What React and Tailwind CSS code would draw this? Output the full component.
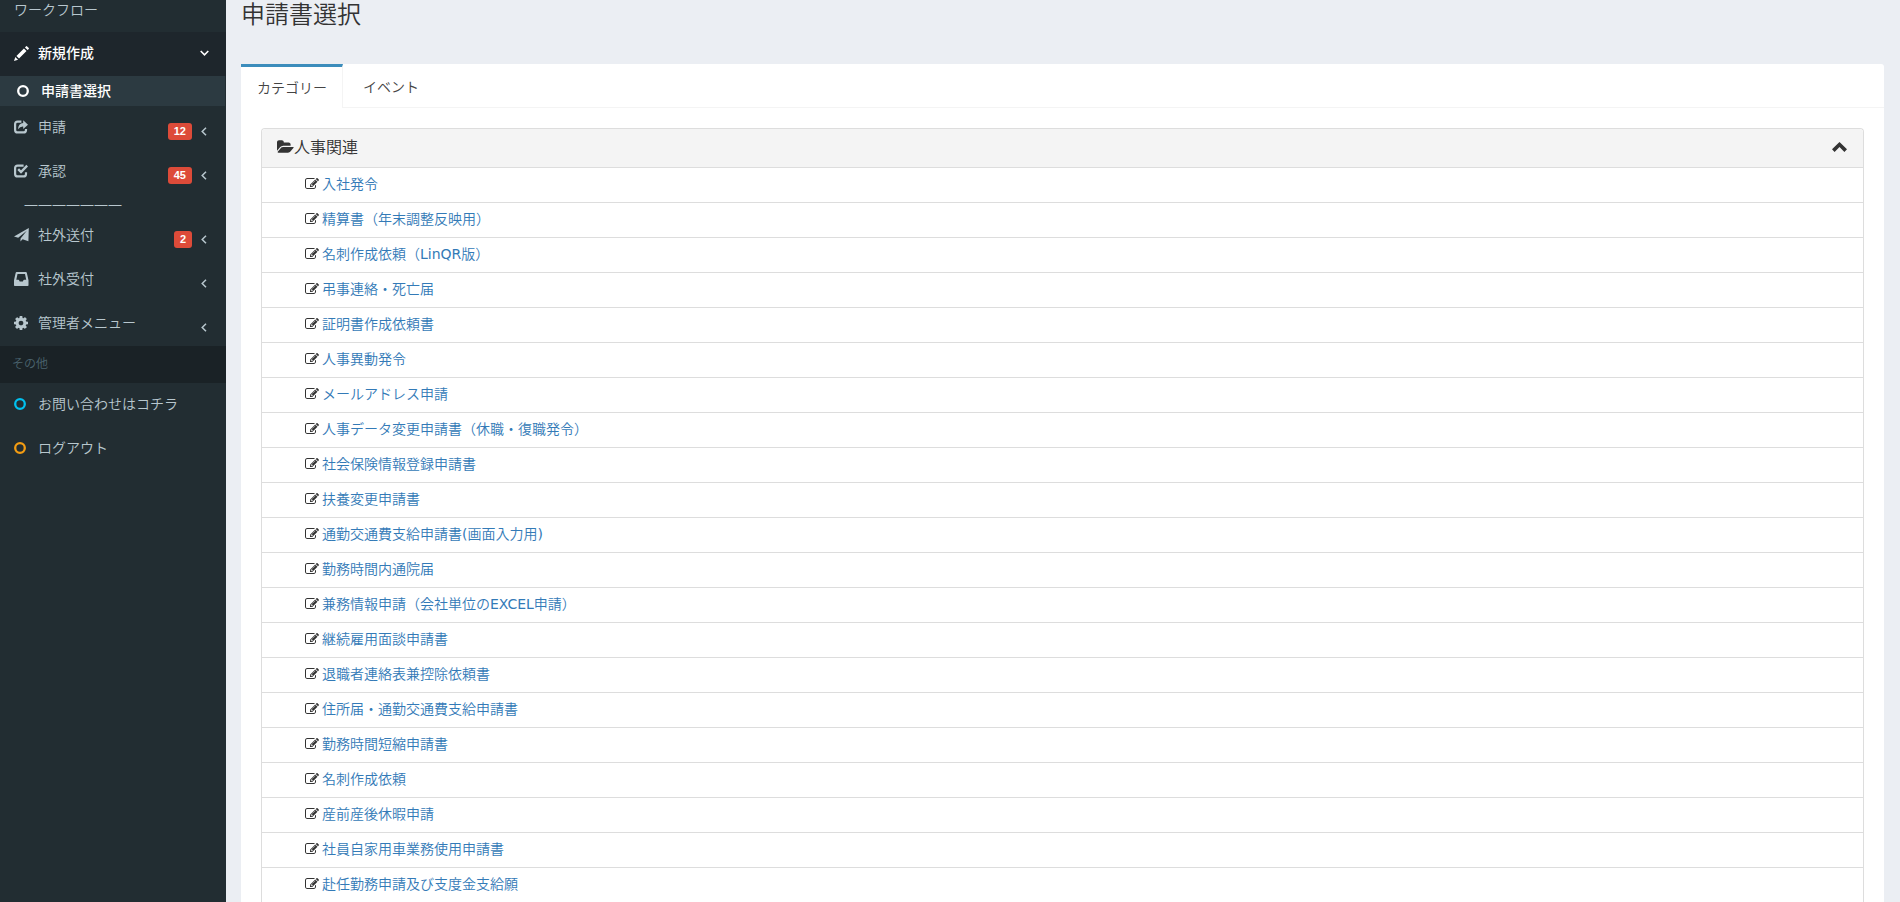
import React, { useState } from 'react';

const forms = [
  '入社発令',
  '精算書（年末調整反映用）',
  '名刺作成依頼（LinQR版）',
  '弔事連絡・死亡届',
  '証明書作成依頼書',
  '人事異動発令',
  'メールアドレス申請',
  '人事データ変更申請書（休職・復職発令）',
  '社会保険情報登録申請書',
  '扶養変更申請書',
  '通勤交通費支給申請書(画面入力用)',
  '勤務時間内通院届',
  '兼務情報申請（会社単位のEXCEL申請）',
  '継続雇用面談申請書',
  '退職者連絡表兼控除依頼書',
  '住所届・通勤交通費支給申請書',
  '勤務時間短縮申請書',
  '名刺作成依頼',
  '産前産後休暇申請',
  '社員自家用車業務使用申請書',
  '赴任勤務申請及び支度金支給願',
];

const PencilIcon = () => (
  <svg viewBox="-16 -16 1232 1232" className="w-[15px] h-[15px] shrink-0" fill="currentColor" aria-hidden="true">
    <g transform="matrix(1 0 0 -1 0 1200)">
      <path d="M1011 1210q19 0 33 -13l153 -153q13 -14 13 -33t-13 -33l-99 -92l-214 214l95 96q13 14 32 14zM1013 800l-615 -614l-214 214l614 614zM317 96l-333 -112l110 335z" />
    </g>
  </svg>
);

const ShareIcon = () => (
  <svg viewBox="0 0 14 14" className="w-[14px] h-[14px] shrink-0" aria-hidden="true">
    <path d="M7.4 1.6H3.6Q1.1 1.6 1.1 4.1V9.9Q1.1 12.4 3.6 12.4H9.5Q12 12.4 12 9.9V9" fill="none" stroke="currentColor" strokeWidth="2.2" />
    <path d="M9.2 0.2L14 4.7L9.2 9V6.5Q6 6.3 4 9.2Q4.3 3.4 9.2 2.9z" fill="currentColor" />
  </svg>
);

const CheckIcon = () => (
  <svg viewBox="0 0 14 14" className="w-[14px] h-[14px] shrink-0" fill="none" stroke="currentColor" aria-hidden="true">
    <path d="M9.6 1.6H3.6Q1.1 1.6 1.1 4.1V9.9Q1.1 12.4 3.6 12.4H9.5Q12 12.4 12 9.9V8.2" strokeWidth="2.2" />
    <path d="M4.2 5.2L7 8L13.2 1.6" strokeWidth="2.4" />
  </svg>
);

const SendIcon = () => (
  <svg viewBox="0 0 15 14" className="w-[15px] h-[14px] shrink-0" fill="currentColor" aria-hidden="true">
    <path d="M14.8 0L0 8.6L4.2 9.8L12.8 2.8L6.6 10.4L6.4 13.6L8.6 11.2L14.4 13.2z" />
  </svg>
);

const InboxIcon = () => (
  <svg viewBox="0 0 15 14" className="w-[15px] h-[14px] shrink-0" fill="currentColor" fillRule="evenodd" aria-hidden="true">
    <path d="M2.6 0H11.9Q12.6 0 12.8 0.7L14.5 8.2V13.2Q14.5 14 13.7 14H0.8Q0 14 0 13.2V8.2L1.7 0.7Q1.9 0 2.6 0zM3.5 1.9L2.3 7.8H4.4Q5 7.8 5.2 8.4L5.7 9.6H8.8L9.3 8.4Q9.5 7.8 10.1 7.8H12.2L11 1.9z" />
  </svg>
);

const CogIcon = () => (
  <svg viewBox="128 128 1536 1536" className="w-[14px] h-[14px] shrink-0" fill="currentColor" aria-hidden="true">
    <path d="M1152 896q0-106-75-181t-181-75-181 75-75 181 75 181 181 75 181-75 75-181zm512-109v222q0 12-8 23t-20 13l-185 28q-19 54-39 91 35 50 107 138 10 12 10 25t-9 23q-27 37-99 108t-94 71q-12 0-26-9l-138-108q-44 23-91 38-16 136-29 186-7 28-36 28h-222q-14 0-24.5-8.5t-11.5-21.5l-28-184q-49-16-90-37l-141 107q-10 9-25 9-14 0-25-11-126-114-165-168-7-10-7-23 0-12 8-23 15-21 51-66.5t54-70.5q-27-50-41-99l-183-27q-13-2-21-12.5t-8-23.5v-222q0-12 8-23t19-13l186-28q14-46 39-92-40-57-107-138-10-12-10-24 0-10 9-23 26-36 98.5-107.5t94.5-71.5q13 0 26 10l138 107q44-23 91-38 16-136 29-186 7-28 36-28h222q14 0 24.5 8.5t11.5 21.5l28 184q49 16 90 37l142-107q9-9 24-9 13 0 25 10 129 119 165 170 7 8 7 22 0 12-8 23-15 21-51 66.5t-54 70.5q26 50 41 98l183 28q13 2 21 12.5t8 23.5z" />
  </svg>
);

const CircleIcon = () => (
  <svg viewBox="0 0 12 12" className="w-3 h-3 shrink-0" fill="none" stroke="currentColor" strokeWidth="2.3" aria-hidden="true">
    <circle cx="6" cy="6" r="4.8" />
  </svg>
);

const AngleLeft = () => (
  <svg viewBox="0 0 6 9" className="w-[6px] h-[9px]" fill="none" stroke="currentColor" strokeWidth="1.5" aria-hidden="true">
    <path d="M5 0.7L1.2 4.5L5 8.3" />
  </svg>
);

const AngleDown = () => (
  <svg viewBox="0 0 9 6" className="w-[9px] h-[6px]" fill="none" stroke="currentColor" strokeWidth="1.6" aria-hidden="true">
    <path d="M0.7 1L4.5 4.8L8.3 1" />
  </svg>
);

const FolderOpenIcon = () => (
  <svg viewBox="0 0 1920 1792" className="w-[17px] h-4 shrink-0" fill="currentColor" aria-hidden="true">
    <path d="M1879 952q0 31-31 66l-336 396q-43 51-120.5 86.5t-143.5 35.5h-1088q-34 0-60.5-13t-26.5-43q0-31 31-66l336-396q43-51 120.5-86.5t143.5-35.5h1088q34 0 60.5 13t26.5 43zm-343-344v160h-832q-94 0-197 47.5t-164 119.5l-337 396-5 6q0-4-.5-12.5t-.5-12.5v-960q0-92 66-158t158-66h320q92 0 158 66t66 158v32h544q92 0 158 66t66 158z" />
  </svg>
);

const ChevronUpIcon = () => (
  <svg viewBox="0 0 15 10" className="w-[15px] h-[10px]" fill="currentColor" aria-hidden="true">
    <path d="M7.5 0L15 7.3L12.4 9.9L7.5 5.1L2.6 9.9L0 7.3z" />
  </svg>
);

const EditIcon = () => (
  <svg viewBox="0 0 1792 1792" className="w-[14px] h-[14px] shrink-0" fill="currentColor" aria-hidden="true">
    <path d="M888 1184l116-116-152-152-116 116v56h96v96h56zm440-720q-16-16-33 1l-350 350q-17 17-1 33t33-1l350-350q17-17 1-33zm80 594v190q0 119-84.5 203.5t-203.5 84.5h-832q-119 0-203.5-84.5t-84.5-203.5v-832q0-119 84.5-203.5t203.5-84.5h832q63 0 117 25 15 7 18 23 3 17-9 29l-49 49q-14 14-32 8-23-6-45-6h-832q-66 0-113 47t-47 113v832q0 66 47 113t113 47h832q66 0 113-47t47-113v-126q0-13 9-22l64-64q15-15 35-7t20 29zm-96-738l288 288-672 672h-288v-288zm444 132l-92 92-288-288 92-92q28-28 68-28t68 28l152 152q28 28 28 68t-28 68z" />
  </svg>
);

function MenuItem({ icon, label, badge, arrow }) {
  return (
    <li>
      <a href="#" className="flex h-11 items-center pl-[14px] pr-[19px] pb-0.5 hover:bg-[#1e282c] hover:text-white">
        <span className="w-6">{icon}</span>
        <span className="flex-1">{label}</span>
        <span className="flex items-center gap-[9px] pt-2">
          {badge && (
            <span className="rounded-[3px] bg-[#dd4b39] px-[6px] font-['Liberation_Sans',sans-serif] text-[11px] leading-[17px] font-bold text-white">
              {badge}
            </span>
          )}
          {arrow && <AngleLeft />}
        </span>
      </a>
    </li>
  );
}

// Latin letters and half-width brackets use the wider sans face
function FormLink({ name }) {
  return (
    <a href="#" className="text-[#337ab7] hover:underline">
      {name.split(/([A-Za-z()]+)/).map((part, i) => (
        i % 2
          ? <span key={i} className="font-['DejaVu_Sans',sans-serif] font-normal">{part}</span>
          : part
      ))}
    </a>
  );
}

export default function App() {
  const [tab, setTab] = useState('category');
  const [open, setOpen] = useState(true);

  return (
    <div className="flex h-screen overflow-hidden bg-[#ebeef3] font-['Noto_Sans','Noto_Sans_CJK_JP',sans-serif] text-sm leading-5 font-[350] text-[#333]">
      {/* Sidebar */}
      <aside className="w-[226px] shrink-0 bg-[#222d32] text-[#b8c7ce]">
        <p className="h-8 pl-[14px]">ワークフロー</p>
        <nav>
          <ul>
            <li className="font-medium text-white">
              <a href="#" className="flex h-11 items-center bg-[#1e262c] pl-[14px] pr-[17px] pb-0.5">
                <span className="w-6"><PencilIcon /></span>
                <span className="flex-1">新規作成</span>
                <AngleDown />
              </a>
              <ul>
                <li>
                  <a href="#" className="flex h-[30px] items-center border-r border-[#222d32] bg-[#2c3a41] pl-[17px]">
                    <span className="w-6"><CircleIcon /></span>
                    申請書選択
                  </a>
                </li>
              </ul>
            </li>
            <MenuItem icon={<ShareIcon />} label="申請" badge="12" arrow />
            <MenuItem icon={<CheckIcon />} label="承認" badge="45" arrow />
            <li className="pl-6">———————</li>
            <MenuItem icon={<SendIcon />} label="社外送付" badge="2" arrow />
            <MenuItem icon={<InboxIcon />} label="社外受付" arrow />
            <MenuItem icon={<CogIcon />} label="管理者メニュー" arrow />
            <li className="flex h-[37px] items-center bg-[#1a2226] pl-3 pb-0.5 text-xs text-[#4b646f]">その他</li>
            <MenuItem icon={<span className="text-[#00c0ef]"><CircleIcon /></span>} label="お問い合わせはコチラ" />
            <MenuItem icon={<span className="text-[#f39c12]"><CircleIcon /></span>} label="ログアウト" />
          </ul>
        </nav>
      </aside>

      {/* Content */}
      <main className="min-w-0 flex-1 pl-[15px] pr-4">
        <h1 className="h-16 text-2xl leading-7">申請書選択</h1>

        <div className="rounded-[3px] bg-white">
          <div className="flex border-b border-[#f4f4f4] text-[#444]">
            <button
              type="button"
              onClick={() => setTab('category')}
              className={tab === 'category'
                ? '-mb-px h-11 border-t-3 border-r border-t-[#3c8dbc] border-r-[#f4f4f4] bg-white pl-4 pr-[15px]'
                : 'h-[43px] border-t-3 border-transparent px-4'}
            >
              カテゴリー
            </button>
            <button
              type="button"
              onClick={() => setTab('event')}
              className={tab === 'event'
                ? '-mb-px h-11 border-t-3 border-x border-t-[#3c8dbc] border-x-[#f4f4f4] bg-white px-5'
                : 'h-[43px] border-t-3 border-transparent px-5'}
            >
              イベント
            </button>
          </div>

          {tab === 'category' && (
            <div className="p-5">
              <section className="rounded-t border border-b-0 border-[#ddd]">
                <h2>
                  <button
                    type="button"
                    onClick={() => setOpen(!open)}
                    aria-expanded={open}
                    className="flex h-[38px] w-full items-center rounded-t bg-[#f4f4f4] pl-[15px] pr-4 pb-0.5 text-base"
                  >
                    <FolderOpenIcon />
                    <span className="flex-1 text-left">人事関連</span>
                    <ChevronUpIcon />
                  </button>
                </h2>
                {open && (
                  <ul>
                    {forms.map((form) => (
                      <li key={form} className="flex h-[35px] items-center gap-[3px] border-t border-[#ddd] pl-[43px] pb-0.5">
                        <EditIcon />
                        <FormLink name={form} />
                      </li>
                    ))}
                  </ul>
                )}
              </section>
            </div>
          )}
        </div>
      </main>
    </div>
  );
}
